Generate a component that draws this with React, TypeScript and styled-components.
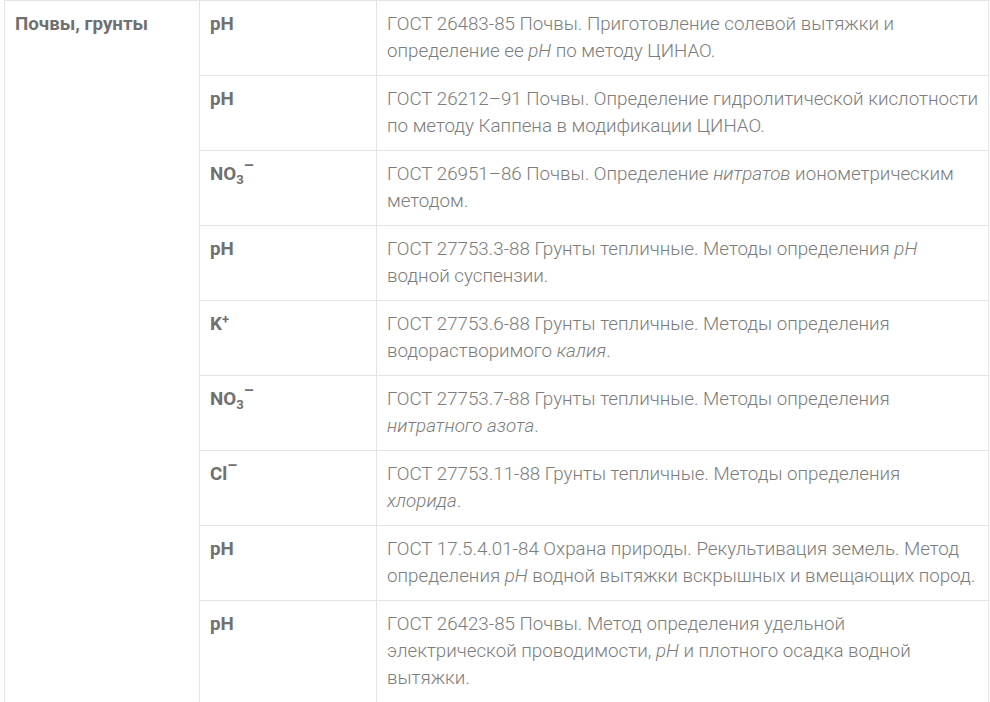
import React from "react";
import styled, { createGlobalStyle } from "styled-components";

const Global = createGlobalStyle`
  html, body { margin: 0; padding: 0; background: #fff; }
  body { font-family: Roboto, "Noto Sans", sans-serif; }
`;

const Wrap = styled.div`
  padding: 0 0 0 4px;
  width: 985px;
`;

const Table = styled.table`
  width: 985px;
  border-collapse: collapse;
  table-layout: fixed;
  color: #7c7c7c;
  font-family: Roboto, "Noto Sans", sans-serif;
  font-size: 18.75px;
  line-height: 27px;
`;

const Cell = styled.td<{ $w?: number }>`
  box-sizing: border-box;
  border: 1px solid #e4e4e4;
  padding: 10px 10px 10px 10px;
  vertical-align: top;
  ${(p) => (p.$w ? `width: ${p.$w}px;` : "")}
`;

const Label = styled(Cell)`
  font-weight: 700;
  color: #707070;
`;

const Desc = styled(Cell)`
  font-weight: 300;
  padding-right: 9px;
`;

const Sub = styled.sub`
  font-size: 13px;
  line-height: 0;
  vertical-align: -4px;
`;

const Sup = styled.sup<{ $dash?: boolean }>`
  font-size: ${(p) => (p.$dash ? "16px" : "13px")};
  line-height: 0;
  vertical-align: ${(p) => (p.$dash ? "9px" : "6px")};
`;

const Em = styled.i`
  font-style: italic;
`;

const NO3 = () => (
  <>
    NO<Sub>3</Sub>
    <Sup $dash>–</Sup>
  </>
);

type Row = { label: React.ReactNode; desc: React.ReactNode };

const rows: Row[] = [
  {
    label: "pH",
    desc: (
      <>
        ГОСТ 26483-85 Почвы. Приготовление солевой вытяжки и определение ее <Em>pH</Em> по методу ЦИНАО.
      </>
    ),
  },
  {
    label: "pH",
    desc: <>ГОСТ 26212–91 Почвы. Определение гидролитической кислотности по методу Каппена в модификации ЦИНАО.</>,
  },
  {
    label: <NO3 />,
    desc: (
      <>
        ГОСТ 26951–86 Почвы. Определение <Em>нитратов</Em> ионометрическим методом.
      </>
    ),
  },
  {
    label: "pH",
    desc: (
      <>
        ГОСТ 27753.3-88 Грунты тепличные. Методы определения <Em>pH</Em> водной суспензии.
      </>
    ),
  },
  {
    label: (
      <>
        K<Sup>+</Sup>
      </>
    ),
    desc: (
      <>
        ГОСТ 27753.6-88 Грунты тепличные. Методы определения водорастворимого <Em>калия</Em>.
      </>
    ),
  },
  {
    label: <NO3 />,
    desc: (
      <>
        ГОСТ 27753.7-88 Грунты тепличные. Методы определения <Em>нитратного азота</Em>.
      </>
    ),
  },
  {
    label: (
      <>
        Cl<Sup $dash>–</Sup>
      </>
    ),
    desc: (
      <>
        ГОСТ 27753.11-88 Грунты тепличные. Методы определения <Em>хлорида</Em>.
      </>
    ),
  },
  {
    label: "pH",
    desc: (
      <>
        ГОСТ 17.5.4.01-84 Охрана природы. Рекультивация земель. Метод определения <Em>pH</Em> водной вытяжки вскрышных и вмещающих пород.
      </>
    ),
  },
  {
    label: "pH",
    desc: (
      <>
        ГОСТ 26423-85 Почвы. Метод определения удельной электрической проводимости, <Em>pH</Em> и плотного осадка водной вытяжки.
      </>
    ),
  },
];

export default function App() {
  return (
    <>
      <Global />
      <Wrap>
        <Table>
          <tbody>
            {rows.map((r, i) => (
              <tr key={i}>
                {i === 0 && (
                  <Label $w={195} rowSpan={rows.length}>
                    Почвы, грунты
                  </Label>
                )}
                <Label $w={177}>{r.label}</Label>
                <Desc>{r.desc}</Desc>
              </tr>
            ))}
          </tbody>
        </Table>
      </Wrap>
    </>
  );
}
